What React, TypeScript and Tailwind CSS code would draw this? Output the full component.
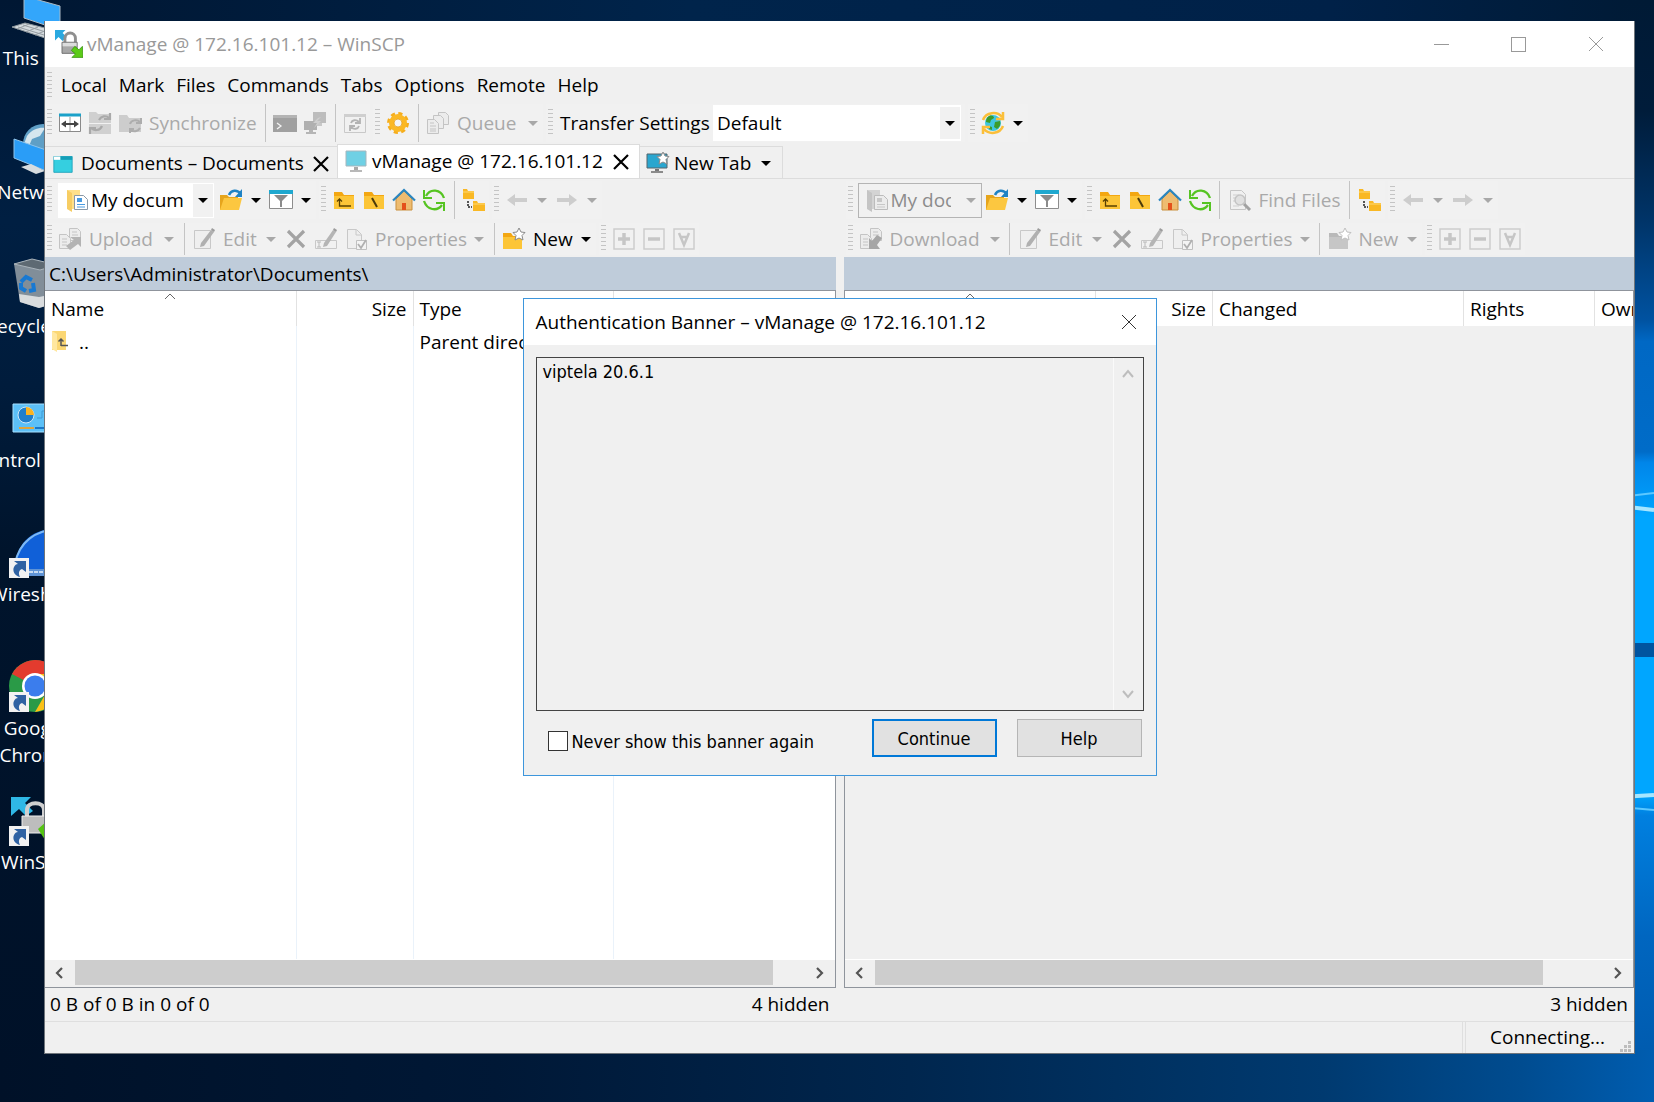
import React, { useState } from 'react'
import type { ReactNode } from 'react'

type IconProps = { off?: boolean }

const Svg = ({ children, className = 'w-6 h-6' }: { children: ReactNode; className?: string }) => (
  <svg viewBox="0 0 24 24" fill="none" className={`${className} shrink-0`} aria-hidden="true">
    {children}
  </svg>
)

/* ---------- toolbar icons ---------- */

const CompareIcon = () => (
  <Svg>
    <path d="M1.5 3.5h21v17h-21z" fill="#fff" stroke="#8a8a8a" />
    <path d="M1 2.5h22v3H1z" fill="#1ba1c9" />
    <path d="M12 6v14" stroke="#9a9a9a" />
    <path d="M6 13h12" stroke="#444" strokeWidth="2" />
    <path d="M8 9.500l-5 3.500 5 3.500zM16 9.500l5 3.500-5 3.500z" fill="#444" />
  </Svg>
)

const SyncFoldersIcon = () => (
  <Svg>
    <path d="M1 1h7l2 2h13v9H1zM1 13h22v10H1z" fill="#d0d0d0" />
    <path d="M11 9c2-4 7-5 10-2M22 2v6h-6M14 15c-2 5-8 5-11 2M2 23v-6h6" stroke="#a9a9a9" strokeWidth="2.200" />
  </Svg>
)

const SyncFolderIcon = () => (
  <Svg>
    <path d="M1 4h8l2 3h12v14H1z" fill="#cdcdcd" />
    <path d="M12 13c1-4 7-5 10-2M23 7v5h-5M22 17c-2 4-7 4-9 2M12 22v-4h4" stroke="#adadad" strokeWidth="2" />
  </Svg>
)

const ConsoleIcon = () => (
  <Svg>
    <path d="M0 4h24v17H0z" fill="#a0a0a0" />
    <path d="M0 4h24v3H0z" fill="#b4b4b4" />
    <path d="M4 12l4 3-4 3" stroke="#f4f4f4" strokeWidth="1.300" />
  </Svg>
)

const PuttyIcon = () => (
  <Svg>
    <path d="M10 1h13v11H10z" fill="#bdbdbd" />
    <path d="M14 12h5v3h-5z" fill="#c8c8c8" />
    <path d="M1 10h13v9H1z" fill="#b0b0b0" />
    <path d="M6 19h4v2H6zM3 21h10v2H3z" fill="#b5b5b5" />
    <path d="M15 7l-5 5h4l-3 5 7-7h-4l4-4z" fill="#cfcfcf" />
  </Svg>
)

const SyncBrowseIcon = () => (
  <Svg>
    <path d="M1.500 3.500h21v18h-21z" stroke="#c9c9c9" />
    <path d="M1 3h22v3H1z" fill="#cfcfcf" />
    <path d="M8 12c1-3 5-4 8-1M17 7v5h-5M16 15c-1 3-5 4-8 1M7 20v-5h5" stroke="#b3b3b3" strokeWidth="1.800" />
  </Svg>
)

const GearIcon = () => (
  <Svg>
    <circle cx="12" cy="12" r="9" stroke="#f5ad1c" strokeWidth="4" strokeDasharray="3.900 3.170" />
    <circle cx="12" cy="12" r="6.500" stroke="#fbb824" strokeWidth="5" />
    <circle cx="12" cy="12" r="4" fill="#f4f4f4" stroke="#e8a012" strokeWidth=".8" />
  </Svg>
)

const QueueIcon = () => (
  <Svg>
    <path d="M12.500 1.500h7l3 3v9h-10z" fill="#ececec" stroke="#c4c4c4" />
    <path d="M7.500 4.500h7l3 3v10h-10z" fill="#ececec" stroke="#c4c4c4" />
    <path d="M1.500 8.500h7l4 4v10h-11z" fill="#ececec" stroke="#c4c4c4" />
    <path d="M4 12h4M4 15h6M4 18h6M4 20h6" stroke="#c4c4c4" />
  </Svg>
)

const GlobeSyncIcon = () => (
  <Svg>
    <circle cx="12" cy="12" r="8" fill="#3fc6df" />
    <path d="M8 5c3-1 5 0 5 2l-3 2-1 3-4-1c0-3 1-5 3-6zM14 11l5-1c1 3 0 6-3 8l-3-2zM8 15l3 1v3l-3-1z" fill="#3c9c2c" />
    <path d="M2 9c3-8 14-9 19-3M22 1v7h-7M22 15c-3 8-14 9-19 3M2 23v-7h7" stroke="#fbbf3a" strokeWidth="2.500" />
  </Svg>
)

const MyDocsIcon = ({ off }: IconProps) => (
  <Svg>
    <path d="M2 2h13v19H2z" fill={off ? '#d4d4d4' : '#ffe08a'} />
    <path d="M2 2l5 3v19l-5-3z" fill={off ? '#c4c4c4' : '#f7cd63'} />
    <path d="M9.500 7.500h9l4 4v10h-13z" fill={off ? '#ececec' : '#fff'} stroke={off ? '#bcbcbc' : '#8a98a6'} />
    <path d="M12 10h5v4h-5z" fill={off ? '#c8c8c8' : '#4a9be0'} />
    <path d="M12 16.500h8M12 19h8" stroke={off ? '#c8c8c8' : '#4a9be0'} />
  </Svg>
)

const OpenFolderIcon = () => (
  <Svg>
    <path d="M1 7h7l2 2h9v13H1z" fill="#e6a51c" />
    <path d="M5 10h18l-3 12H1z" fill="#fcc740" />
    <path d="M10 7c2-5 8-6 12-1" stroke="#1f83c4" strokeWidth="2.500" />
    <path d="M23 1v8h-7z" fill="#1f83c4" />
  </Svg>
)

const FilterIcon = () => (
  <Svg>
    <path d="M.5 3.500h23v17H.5z" fill="#fff" stroke="#8d8d8d" />
    <path d="M0 2h24v4H0z" fill="#1fa8cf" />
    <path d="M5 7h14l-6 6v6h-2v-6z" fill="#8b8b8b" />
  </Svg>
)

const FolderBase = () => (
  <>
    <path d="M2 4h8l2 3h10v14H2z" fill="#f3a712" />
    <path d="M2 8h20v13H2z" fill="#fcc537" />
  </>
)

const ParentFolderIcon = () => (
  <Svg>
    <FolderBase />
    <path d="M7.500 11v7H19M5 13.500L7.500 11l2.500 2.500" stroke="#5a4100" strokeWidth="1.300" />
  </Svg>
)

const RootFolderIcon = () => (
  <Svg>
    <FolderBase />
    <path d="M10 10l5 9" stroke="#4b3a0a" strokeWidth="2" />
  </Svg>
)

const HomeIcon = () => (
  <Svg>
    <path d="M4 11l8-8 8 8v11H4z" fill="#eebc70" stroke="#c98f3c" />
    <path d="M10 15h4v7h-4z" fill="#e4511b" />
    <path d="M1 12.500L12 2l11 10.500" stroke="#2a86c0" strokeWidth="2.200" />
  </Svg>
)

const RefreshIcon = () => (
  <Svg>
    <path d="M4 8c4-8 15-7 18 2M20 17c-5 7-15 5-18-4" stroke="#56c422" strokeWidth="2.300" />
    <path d="M2 2v8h8M22 23v-8h-8" stroke="#56c422" strokeWidth="2" />
  </Svg>
)

const TreeIcon = () => (
  <Svg>
    <path d="M1 1h4l1 2h6v8H1z" fill="#f9b824" />
    <path d="M11 13h4l1 2h7v8H11z" fill="#f9b824" />
    <path d="M1 4h11M11 16h12" stroke="#ffd973" />
    <path d="M6 13v6h4" stroke="#222" strokeWidth="1.500" strokeDasharray="2 1" />
  </Svg>
)

const BackIcon = () => (
  <Svg><path d="M2 12l8-6v4h12v4H10v4z" fill="#cdcdcd" /></Svg>
)

const ForwardIcon = () => (
  <Svg><path d="M22 12l-8-6v4H2v4h12v4z" fill="#cdcdcd" /></Svg>
)

const FindIcon = () => (
  <Svg>
    <path d="M2.500 2.500h11l4 4v15h-15z" fill="#f0f0f0" stroke="#c6c6c6" />
    <path d="M5 7h6M5 10h4M5 13h3M5 18h6" stroke="#cfcfcf" />
    <circle cx="12" cy="12" r="5" fill="#e0e0e0" stroke="#c4c4c4" strokeWidth="1.500" />
    <path d="M16 16l6 6" stroke="#a2a2a2" strokeWidth="3" />
  </Svg>
)

const TransferPages = () => (
  <>
    <path d="M11.500 1.500h8l3 3v9h-11z" fill="#ececec" stroke="#c4c4c4" />
    <path d="M14 5h5M14 8h6" stroke="#c4c4c4" />
    <path d="M1.500 7.500h7l4 4v10h-11z" fill="#ececec" stroke="#c4c4c4" />
    <path d="M4 12h5M4 15h5M4 18h5" stroke="#c4c4c4" />
  </>
)

const UploadIcon = () => (
  <Svg>
    <TransferPages />
    <path d="M8 19l8-6-4-3h11v10l-3-3-8 6z" fill="#b3b3b3" />
  </Svg>
)

const DownloadIcon = () => (
  <Svg>
    <TransferPages />
    <path d="M23 11l-5-3-5 6-3-3v11h11l-3-4z" fill="#a6a6a6" />
  </Svg>
)

const EditIcon = () => (
  <Svg>
    <path d="M2.500 3.500h16v18h-16z" fill="#efefef" stroke="#c8c8c8" />
    <path d="M19 3l3 2L12 19l-4 1 1-4z" fill="#b0b0b0" />
    <path d="M20 1l3 2-1 2-3-2z" fill="#9c9c9c" />
  </Svg>
)

const DeleteIcon = () => (
  <Svg><path d="M4 4l16 16M20 4L4 20" stroke="#a3a3a3" strokeWidth="3.200" /></Svg>
)

const RenameIcon = () => (
  <Svg>
    <path d="M1.500 13.500h21v8h-21z" stroke="#c8c8c8" />
    <path d="M3 15h4M3 20h4M5 15v5" stroke="#b9b9b9" />
    <path d="M19 3l3 2-9 14-4 1 1-4z" fill="#b5b5b5" />
    <path d="M20 1l3 2-1 2-3-2z" fill="#9c9c9c" />
  </Svg>
)

const PropertiesIcon = () => (
  <Svg>
    <path d="M3.500 2.500h9l5 5v14h-14z" fill="#efefef" stroke="#c8c8c8" />
    <path d="M12 3v5h5" stroke="#c8c8c8" />
    <path d="M12.500 13.500h10v9h-10z" fill="#f4f4f4" stroke="#c0c0c0" />
    <path d="M14 17l3 4 5-8" stroke="#b0b0b0" strokeWidth="1.800" />
  </Svg>
)

const NewFolderIcon = ({ off }: IconProps) => (
  <Svg>
    <path d="M1 6h8l2 3h9v13H1z" fill={off ? '#b9b9b9' : '#f3a712'} />
    <path d="M1 10h19v12H1z" fill={off ? '#c6c6c6' : '#fcc537'} />
    <path
      d="M17 1l2 4 4 .5-3 3 1 4.500-4-2-4 2 1-4.500-3-3 4-.5z"
      fill="#fff" stroke={off ? '#c0c0c0' : '#8a8a8a'}
    />
  </Svg>
)

const Boxed = ({ children }: { children: ReactNode }) => (
  <Svg>
    <path d="M2 2h20v20H2z" stroke="#cdcdcd" strokeWidth="1.500" />
    {children}
  </Svg>
)

const PlusIcon = () => <Boxed><path d="M12 6v12M6 12h12" stroke="#c6c6c6" strokeWidth="3.500" /></Boxed>
const MinusIcon = () => <Boxed><path d="M6 12h12" stroke="#c6c6c6" strokeWidth="3.500" /></Boxed>
const InvertIcon = () => <Boxed><path d="M7 6l5 12 5-12M8 10h8" stroke="#c6c6c6" strokeWidth="2.500" /></Boxed>

/* ---------- tab, window and desktop icons ---------- */

const LocalTabIcon = () => (
  <Svg className="w-5 h-5">
    <path d="M1 3h22v19H1z" fill="#35cfe0" stroke="#1aa0b8" />
    <path d="M1 3h8v4H1z" fill="#fff" />
    <path d="M9 3h14v4H9z" fill="#159fb8" />
  </Svg>
)

const MonitorIcon = () => (
  <Svg className="w-6 h-6">
    <path d="M2 1h20v15H2z" fill="#6fd0e4" stroke="#a6b6bd" />
    <path d="M10 17h4v3h-4z" fill="#a8a8a8" />
    <path d="M6 20h12v2H6z" fill="#b8b8b8" />
  </Svg>
)

const NewTabIcon = () => (
  <Svg className="w-6 h-6">
    <path d="M1 2h20v14H1z" fill="#2aa6cf" stroke="#55656d" />
    <path d="M9 17h4v3H9z" fill="#777" />
    <path d="M5 19h12v2H5z" fill="#8b8b8b" />
    <path d="M17 0l2 4 4 .5-3 3 1 4.500-4-2-4 2 1-4.500-3-3 4-.5z" fill="#fff" stroke="#8a8a8a" />
  </Svg>
)

const WinScpIcon = ({ className = 'w-7 h-7' }: { className?: string }) => (
  <Svg className={className}>
    <path d="M0 0h9L6.500 2.500 10 6 6.500 9.500 3 6 0 9z" fill="#2aa9e0" />
    <path d="M8.500 12V7a4.500 4.500 0 019 0v5" stroke="#8f8f8f" strokeWidth="2.500" />
    <path d="M6 10.500h13V20H6z" fill="#a7a7a7" stroke="#6d6d6d" strokeWidth=".8" />
    <path d="M6.500 11h12v3h-12z" fill="#dcdcdc" />
    <path d="M24 23.500h-9.500l3-3-3.500-3 3-3.500 3.500 3 3-3z" fill="#5ccb18" stroke="#2f8a0a" strokeWidth=".6" />
  </Svg>
)

const FolderUpIcon = () => (
  <Svg className="w-6 h-6">
    <path d="M1 1h14v19H1z" fill="#fbd774" />
    <path d="M1 1l5 3v18l-5-3z" fill="#ffe7a0" />
    <path d="M10 16V9M7.500 11.500L10 9l2.500 2.500M10 15.500h7" stroke="#555" strokeWidth="1.500" />
  </Svg>
)

const DesktopSvg = ({ children }: { children: ReactNode }) => (
  <svg viewBox="0 0 52 52" fill="none" className="w-[52px] h-[52px]" aria-hidden="true">{children}</svg>
)

const Shortcut = () => (
  <>
    <path d="M0 32h20v20H0z" fill="#f2f2f2" />
    <path d="M5 35h12v11l-4-3c-3 1-4 4-2 8-5-1-8-6-6-10 1-2 2-3 4-3z" fill="#2f62a3" />
  </>
)

const ThisPcIcon = () => (
  <DesktopSvg>
    <path d="M15 6l36 10v24L15 28z" fill="#33a6fb" stroke="#a9bac6" />
    <path d="M3 37l13-4 32 8-12 7z" fill="#d4dade" stroke="#8f989e" />
    <path d="M9 37l26 8M14 35l26 8M8 39l12-5M17 42l12-5M26 45l12-5" stroke="#969da2" />
  </DesktopSvg>
)

const NetworkIcon = () => (
  <DesktopSvg>
    <circle cx="34" cy="20" r="20" fill="#5f9fc6" />
    <path d="M18 12c6-8 14-9 18-8l-5 8-8 3-3 7-5-2z" fill="#d6e6ee" />
    <path d="M5 15l35 12v21L5 34z" fill="#2a9df7" stroke="#8ec4ea" />
    <path d="M12 43l10-3 14 7-9 3z" fill="#d7dcdf" />
  </DesktopSvg>
)

const RecycleIcon = () => (
  <DesktopSvg>
    <path d="M5 6l6 38 19 6 14-4 4-38z" fill="#8f9aa3" fillOpacity=".9" />
    <path d="M5 6l18-5 25 6-17 5z" fill="#5e6a73" stroke="#aab4bb" />
    <path d="M10 36l20 3 15-3-2 10-13 4-19-6z" fill="#d9dcde" />
    <path d="M12 24l5-5 6 3M24 25l1 7-5 1M17 33l-5-3v-5" stroke="#1979d2" strokeWidth="4" />
  </DesktopSvg>
)

const ControlPanelIcon = () => (
  <DesktopSvg>
    <path d="M4 12h48v28H4z" fill="#5cc0f7" stroke="#a6e0ff" />
    <circle cx="17" cy="23" r="8" fill="#1f7fcb" stroke="#cfe6f5" />
    <path d="M17 23v-8a8 8 0 018 8z" fill="#fbb320" />
    <path d="M10 36h15" stroke="#e0a53a" strokeWidth="2" />
    <path d="M26 36h22" stroke="#1a77c8" strokeWidth="2" />
    <path d="M28 26h5v-7h6v8h8" stroke="#3d9bd6" />
  </DesktopSvg>
)

const WiresharkIcon = () => (
  <DesktopSvg>
    <path d="M5 44C8 14 24 3 50 2v48H18z" fill="#1060d8" />
    <path d="M6 38C10 16 26 4 50 3" stroke="#7db9f5" strokeWidth="2" />
    <path d="M18 43h34v7H18z" fill="#5e93d6" />
    <path d="M20 46h30" stroke="#c8dcf2" strokeWidth="2" strokeDasharray="4 1" />
    <Shortcut />
  </DesktopSvg>
)

const ChromeIcon = () => (
  <DesktopSvg>
    <circle cx="26" cy="26" r="26" fill="#2a9a47" />
    <path d="M26 26L3 14C9 3 20 0 26 0c12 0 21 7 24 14z" fill="#e33b2e" />
    <path d="M26 14h24c5 18-6 36-24 38l11-19z" fill="#fbc116" />
    <circle cx="26" cy="26" r="13" fill="#fff" />
    <circle cx="26" cy="26" r="10.500" fill="#3b7ded" />
    <Shortcut />
  </DesktopSvg>
)

const WinScpDesktopIcon = () => (
  <DesktopSvg>
    <path d="M2 3h20l-6 6 8 8-7 5-7-7-8 7z" fill="#2fb8e6" />
    <path d="M18 22v-6c0-9 17-9 17 0v6" stroke="#cfcfcf" strokeWidth="4" />
    <path d="M13 22h28v17H13z" fill="#bdbdbd" stroke="#efefef" />
    <path d="M29 35l9-8v5h12v8H38v9z" fill="#54c412" />
    <Shortcut />
  </DesktopSvg>
)

const desktopItems = [
  { name: 'This PC', icon: <ThisPcIcon /> },
  { name: 'Network', icon: <NetworkIcon /> },
  { name: 'Recycle Bin', icon: <RecycleIcon /> },
  { name: 'Control Panel', icon: <ControlPanelIcon /> },
  { name: 'Wireshark', icon: <WiresharkIcon /> },
  { name: 'Google\nChrome', icon: <ChromeIcon /> },
  { name: 'WinSCP', icon: <WinScpDesktopIcon /> },
]

const Wallpaper = () => (
  <svg viewBox="0 0 1654 1102" preserveAspectRatio="none" className="absolute inset-0 w-full h-full" aria-hidden="true">
    <defs>
      <linearGradient id="left" x1="0" y1="0" x2="0" y2="1">
        <stop offset="0" stopColor="#001733" />
        <stop offset=".2" stopColor="#001f42" />
        <stop offset=".35" stopColor="#001c3c" />
        <stop offset=".5" stopColor="#00142c" />
        <stop offset="1" stopColor="#001128" />
      </linearGradient>
      <linearGradient id="bottom" x1="0" y1="0" x2="1" y2="0">
        <stop offset="0" stopColor="#001128" />
        <stop offset=".3" stopColor="#001836" />
        <stop offset=".55" stopColor="#00264e" />
        <stop offset=".8" stopColor="#003a70" />
        <stop offset=".92" stopColor="#004c90" />
        <stop offset="1" stopColor="#005db0" />
      </linearGradient>
      <linearGradient id="top" x1="0" y1="0" x2="1" y2="0">
        <stop offset="0" stopColor="#001733" />
        <stop offset=".4" stopColor="#00244b" />
        <stop offset=".8" stopColor="#002148" />
        <stop offset="1" stopColor="#001a35" />
      </linearGradient>
      <linearGradient id="edge" x1="0" y1="0" x2="0" y2="1">
        <stop offset="0" stopColor="#001a35" />
        <stop offset=".1" stopColor="#001c3a" />
        <stop offset=".2" stopColor="#003468" />
        <stop offset=".29" stopColor="#0052a0" />
        <stop offset=".31" stopColor="#0068c4" />
        <stop offset=".41" stopColor="#006cc8" />
        <stop offset=".42" stopColor="#0086ea" />
        <stop offset=".47" stopColor="#00a6ff" />
        <stop offset=".72" stopColor="#00a6ff" />
        <stop offset=".74" stopColor="#0080e0" />
        <stop offset=".85" stopColor="#0066c0" />
        <stop offset="1" stopColor="#0057a8" />
      </linearGradient>
    </defs>
    <path d="M0 0h1654v1102H0z" fill="url(#left)" />
    <path d="M46 0h1608v40H46z" fill="url(#top)" />
    <path d="M1620 0h34v1102h-34z" fill="url(#edge)" />
    <path d="M0 1050h1654v52H0z" fill="url(#bottom)" />
    <path d="M1620 643h34v14h-34z" fill="#0054a0" />
    <path d="M1620 506l34 4M1620 797l34-2" stroke="#a6e6ff" strokeWidth="4" />
    <path d="M1620 497l34-4M1620 807l34 3" stroke="#5cc8ff" strokeWidth="2" />
  </svg>
)

/* ---------- toolbar parts ---------- */

const Grip = () => (
  <span className="w-2.5 h-7 pl-0.5 shrink-0">
    <span className="block w-[5px] h-full bg-[repeating-linear-gradient(180deg,#c4c4c4_0_1px,transparent_1px_4px)]" />
  </span>
)

const Sep = () => (
  <span className="w-2.5 shrink-0 self-stretch flex justify-center">
    <span className="w-px bg-[#c4c4c4]" />
  </span>
)

const Caret = ({ off }: IconProps) => (
  <span className="w-5 shrink-0 flex justify-center">
    <svg viewBox="0 0 10 5" className="w-2.5 h-[5px]" aria-hidden="true">
      <path d="M0 0h10L5 5z" fill={off ? '#a8a8a8' : '#000'} />
    </svg>
  </span>
)

type ToolProps = {
  icon?: ReactNode
  label: string
  text?: boolean
  drop?: boolean
  off?: boolean
  width?: string
}

const Tool = ({ icon, label, text, drop, off, width = '' }: ToolProps) => (
  <button
    type="button"
    aria-label={label}
    disabled={off}
    className={`h-8 shrink-0 flex items-center whitespace-nowrap ${off ? 'text-[#a9a9a9]' : 'text-black'} ${width}`}
  >
    {icon && <span className="w-[30px] shrink-0 flex justify-center">{icon}</span>}
    {text && <span className="pl-1 mr-auto">{label}</span>}
    {drop && <Caret off={off} />}
  </button>
)

const Group = ({ children }: { children: ReactNode }) => (
  <div className="h-full flex items-center shrink-0 bg-[#f1f1f1]">
    <Grip />
    {children}
  </div>
)

const PaneToolbars = ({ remote }: { remote?: boolean }) => (
  <div className={remote ? 'pl-0.5' : ''}>
    <div className="h-[42px] py-0.5 flex gap-[3px]">
      <Group>
        {remote ? (
          <div className="w-[126px] h-[35px] pl-0.5 flex">
            <div className="flex-1 flex items-center border border-[#b4b4b4] pl-1.5 min-w-0">
              <MyDocsIcon off />
              <select aria-label="Remote directory" disabled className="appearance-none w-[60px] ml-0.5 mr-auto bg-transparent text-[#8c8c8c] opacity-100 overflow-hidden whitespace-nowrap">
                <option>My documents</option>
              </select>
              <Caret off />
            </div>
          </div>
        ) : (
          <div className="w-[161px] h-[35px] pl-[3px] pr-0.5 flex items-center">
            <div className="h-full flex-1 flex items-center border border-white bg-white pl-1.5">
              <MyDocsIcon />
              <select aria-label="Local directory" className="appearance-none w-[92px] ml-0.5 mr-auto bg-transparent overflow-hidden whitespace-nowrap">
                <option>My documents</option>
              </select>
              <span className="h-full flex items-center bg-[#f1f1f1]"><Caret /></span>
            </div>
          </div>
        )}
        <Tool icon={<OpenFolderIcon />} label="Open directory" drop />
        <Tool icon={<FilterIcon />} label="Filter" drop />
      </Group>
      <Group>
        <Tool icon={<ParentFolderIcon />} label="Parent directory" />
        <Tool icon={<RootFolderIcon />} label="Root directory" />
        <Tool icon={<HomeIcon />} label="Home directory" />
        <Tool icon={<RefreshIcon />} label="Refresh" />
        <Sep />
        {remote && (
          <>
            <Tool icon={<FindIcon />} label="Find Files" text off width="w-[120px]" />
            <Sep />
          </>
        )}
        <Tool icon={<TreeIcon />} label="Tree" />
      </Group>
      <Group>
        <Tool icon={<BackIcon />} label="Back" drop off />
        <Tool icon={<ForwardIcon />} label="Forward" drop off />
      </Group>
    </div>
    <div className="h-9 py-0.5 flex gap-[3px]">
      <Group>
        {remote ? (
          <Tool icon={<DownloadIcon />} label="Download" text drop off width="w-[149px]" />
        ) : (
          <Tool icon={<UploadIcon />} label="Upload" text drop off width="w-[124px]" />
        )}
        <Sep />
        <Tool icon={<EditIcon />} label="Edit" text drop off width="w-[92px]" />
        <Tool icon={<DeleteIcon />} label="Delete" off />
        <Tool icon={<RenameIcon />} label="Rename" off />
        <Tool icon={<PropertiesIcon />} label="Properties" text drop off width="w-[148px]" />
        <Sep />
        <Tool icon={<NewFolderIcon off={remote} />} label="New" text drop off={remote} width="w-[97px]" />
      </Group>
      <Group>
        <Tool icon={<PlusIcon />} label="Select" off />
        <Tool icon={<MinusIcon />} label="Unselect" off />
        <Tool icon={<InvertIcon />} label="Invert selection" off />
      </Group>
    </div>
  </div>
)

/* ---------- file panels ---------- */

const Chevron = ({ d }: { d: string }) => (
  <svg viewBox="0 0 12 12" fill="none" className="w-3 h-3" aria-hidden="true">
    <path d={d} stroke="#555" strokeWidth="2.200" />
  </svg>
)

const HScroll = ({ thumb }: { thumb: string }) => (
  <div className="h-7 pb-0.5 flex bg-[#f0f0f0] border-t border-white">
    <button type="button" aria-label="Scroll left" className="w-[30px] h-full flex items-center justify-center">
      <Chevron d="M8 1L3 6l5 5" />
    </button>
    <div className="flex-1">
      <div className={`h-full bg-[#cdcdcd] ${thumb}`} />
    </div>
    <button type="button" aria-label="Scroll right" className="w-8 h-full flex items-center justify-center">
      <Chevron d="M4 1l5 5-5 5" />
    </button>
  </div>
)

type Column = { title: string; width: string; right?: boolean }

const localColumns: Column[] = [
  { title: 'Name', width: 'w-[251px]' },
  { title: 'Size', width: 'w-[117px]', right: true },
  { title: 'Type', width: 'w-[200px]' },
  { title: 'Changed', width: '' },
]

const remoteColumns: Column[] = [
  { title: 'Name', width: 'w-[251px]' },
  { title: 'Size', width: 'w-[117px]', right: true },
  { title: 'Changed', width: 'w-[251px]' },
  { title: 'Rights', width: 'w-[131px]' },
  { title: 'Owner', width: '' },
]

const FileTable = ({ columns, children }: { columns: Column[]; children?: ReactNode }) => (
  <table className="w-full h-full table-fixed border-collapse">
    <thead>
      <tr className="h-[35px] bg-white">
        {columns.map((col) => (
          <th
            key={col.title}
            className={`relative p-0 px-1.5 pt-0.5 font-normal whitespace-nowrap overflow-hidden border-r border-[#e2e2e2] last:border-r-0 ${col.width} ${col.right ? 'text-right' : 'text-left'}`}
          >
            {col.title}
            {col.title === 'Name' && (
              <svg viewBox="0 0 12 7" fill="none" className="absolute top-0.5 left-1/2 -translate-x-1/2 w-3 h-[7px]" aria-hidden="true">
                <path d="M1 6l5-5 5 5" stroke="#666" />
              </svg>
            )}
          </th>
        ))}
      </tr>
    </thead>
    <tbody>{children}</tbody>
  </table>
)

const cell = 'p-0 px-1.5 border-r border-[#eaf2fa] last:border-r-0 whitespace-nowrap overflow-hidden'

const LocalPane = () => (
  <section aria-label="Local files" className="min-w-0 flex flex-col">
    <PaneToolbars />
    <div className="h-[33px] pt-0.5 flex items-center px-1 bg-[#bfccda]">C:\Users\Administrator\Documents\</div>
    <div className="flex-1 flex flex-col bg-white border-t border-r border-b border-[#8f949c]">
      <div className="flex-1">
        <FileTable columns={localColumns}>
          <tr className="h-[32px]">
            <td className={cell}>
              <span className="flex items-center gap-1"><FolderUpIcon />..</span>
            </td>
            <td className={cell} />
            <td className={cell}>Parent directory</td>
            <td className={cell} />
          </tr>
          <tr>
            <td className={cell} />
            <td className={cell} />
            <td className={cell} />
            <td className={cell} />
          </tr>
        </FileTable>
      </div>
      <HScroll thumb="w-[96%]" />
    </div>
    <div className="h-[33px] pl-[5px] pr-1.5 flex items-center justify-between">
      <span>0 B of 0 B in 0 of 0</span>
      <span>4 hidden</span>
    </div>
  </section>
)

const RemotePane = () => (
  <section aria-label="Remote files" className="min-w-0 flex flex-col">
    <PaneToolbars remote />
    <div className="h-[33px] bg-[#bfccda]" />
    <div className="flex-1 flex flex-col bg-[#f0f0f0] border border-[#8f949c]">
      <div className="flex-1 overflow-hidden">
        <FileTable columns={remoteColumns}>
          <tr><td colSpan={5} /></tr>
        </FileTable>
      </div>
      <HScroll thumb="w-[92%]" />
    </div>
    <div className="h-[33px] pl-[5px] pr-1.5 flex items-center justify-end">3 hidden</div>
  </section>
)

/* ---------- window chrome ---------- */

const CrossIcon = ({ className }: { className: string }) => (
  <svg viewBox="0 0 16 16" fill="none" className={className} aria-hidden="true">
    <path d="M1 1l14 14M15 1L1 15" stroke="currentColor" />
  </svg>
)

const TitleBar = () => (
  <header className="h-[46px] flex items-center bg-white text-[#999]">
    <div className="flex-1 flex items-center gap-1 pl-2.5">
      <WinScpIcon />
      <h1>vManage @ 172.16.101.12 – WinSCP</h1>
    </div>
    <button type="button" aria-label="Minimize" className="w-[77px] h-full flex items-center justify-center">
      <span className="w-[15px] h-px bg-[#999]" />
    </button>
    <button type="button" aria-label="Maximize" className="w-[77px] h-full flex items-center justify-center">
      <span className="w-[15px] h-[15px] border border-[#999]" />
    </button>
    <button type="button" aria-label="Close" className="w-[77px] h-full flex items-center justify-center">
      <CrossIcon className="w-4 h-4" />
    </button>
  </header>
)

const menus = ['Local', 'Mark', 'Files', 'Commands', 'Tabs', 'Options', 'Remote', 'Help']

const MenuBar = () => (
  <nav className="h-[37px] flex items-center">
    <Grip />
    {menus.map((menu) => (
      <button key={menu} type="button" className="h-8 px-1.5">{menu}</button>
    ))}
  </nav>
)

const MainToolbar = () => (
  <div className="h-10 pb-0.5 flex gap-[3px]">
    <Group>
      <Tool icon={<CompareIcon />} label="Compare directories" />
      <Tool icon={<SyncFoldersIcon />} label="Synchronize directories" off />
      <Tool icon={<SyncFolderIcon />} label="Synchronize" text off width="w-[145px]" />
      <Sep />
      <Tool icon={<ConsoleIcon />} label="Console" off />
      <Tool icon={<PuttyIcon />} label="Open in PuTTY" off />
      <Sep />
      <Tool icon={<SyncBrowseIcon />} label="Synchronized browsing" off />
    </Group>
    <Group>
      <Tool icon={<GearIcon />} label="Preferences" />
      <Sep />
      <Tool icon={<QueueIcon />} label="Queue" text drop off width="w-[120px]" />
    </Group>
    <Group>
      <label htmlFor="transfer" className="pl-1 w-[157px] whitespace-nowrap">Transfer Settings</label>
      <div className="h-9 w-[248px] flex items-center bg-white border-r border-white">
        <select id="transfer" className="appearance-none flex-1 pl-1 bg-transparent">
          <option>Default</option>
        </select>
        <span className="h-8 flex items-center bg-[#f1f1f1]"><Caret /></span>
      </div>
      <span className="w-1" />
    </Group>
    <Group>
      <Tool icon={<GlobeSyncIcon />} label="Keep up to date" drop />
    </Group>
  </div>
)

const TabClose = ({ name }: { name: string }) => (
  <button type="button" aria-label={`Close ${name}`} className="ml-auto">
    <svg viewBox="0 0 16 16" fill="none" className="w-4 h-4" aria-hidden="true">
      <path d="M1 1l14 14M15 1L1 15" stroke="#000" strokeWidth="2.200" />
    </svg>
  </button>
)

const TabStrip = () => (
  <div className="h-[35px] flex items-end border-b border-[#dcdcdc]">
    <div className="w-[292px] h-8 px-2 pt-0.5 flex items-center gap-2 border-t border-[#dcdcdc]">
      <LocalTabIcon />
      <span className="whitespace-nowrap">Documents – Documents</span>
      <TabClose name="Documents" />
    </div>
    <div className="w-[303px] h-[34px] pl-1.5 pr-2.5 flex items-center gap-1 bg-white border border-b-0 border-[#dcdcdc]">
      <MonitorIcon />
      <span className="whitespace-nowrap">vManage @ 172.16.101.12</span>
      <TabClose name="vManage" />
    </div>
    <button type="button" className="w-[143px] h-8 pl-1.5 pr-1.5 pt-0.5 flex items-center gap-1 border-t border-r border-[#dcdcdc] whitespace-nowrap">
      <NewTabIcon />
      <span className="mr-auto">New Tab</span>
      <Caret />
    </button>
  </div>
)

const StatusBar = () => (
  <footer className="h-8 flex items-stretch border-t border-[#dfdfdf]">
    <div className="flex-1 border-r border-[#dfdfdf]" />
    <div className="w-[169px] ml-0.5 pr-0.5 flex items-center justify-between border-l border-[#dfdfdf]">
      <span className="pl-6">Connecting...</span>
      <svg viewBox="0 0 12 12" className="w-3 h-3 self-end" aria-hidden="true">
        <path d="M8 0h3v3H8zM4 4h3v3H4zM8 4h3v3H8zM0 8h3v3H0zM4 8h3v3H4zM8 8h3v3H8z" fill="#bdbdbd" />
      </svg>
    </div>
  </footer>
)

const BannerDialog = () => {
  const [never, setNever] = useState(false)

  return (
    <div role="dialog" aria-labelledby="banner-title" className="w-[634px] h-[478px] flex flex-col bg-[#f0f0f0] border border-[#3d96dc]">
      <div className="h-[46px] flex items-center justify-between pl-3 bg-white">
        <h2 id="banner-title">Authentication Banner – vManage @ 172.16.101.12</h2>
        <button type="button" aria-label="Close" className="w-[54px] h-full flex items-center justify-center text-[#333]">
          <CrossIcon className="w-4 h-4" />
        </button>
      </div>
      <div className="flex-1 flex flex-col px-3 pt-3 pb-3 font-['DejaVu_Sans_Condensed','DejaVu_Sans',sans-serif] text-[18px]">
        <div className="flex-1 flex border border-[#444]">
          <textarea
            aria-label="Authentication banner"
            readOnly
            value="viptela 20.6.1"
            className="flex-1 resize-none bg-transparent px-1.5 leading-[27px] outline-none"
          />
          <div className="w-[30px] flex flex-col justify-between items-center py-2.5 border-l border-[#fafafa]">
            <svg viewBox="0 0 12 12" fill="none" className="w-3 h-3" aria-hidden="true">
              <path d="M1 9l5-6 5 6" stroke="#bdbdbd" strokeWidth="2" />
            </svg>
            <svg viewBox="0 0 12 12" fill="none" className="w-3 h-3" aria-hidden="true">
              <path d="M1 3l5 6 5-6" stroke="#bdbdbd" strokeWidth="2" />
            </svg>
          </div>
        </div>
        <div className="pt-2 pl-3 pr-0.5 flex items-start gap-5">
          <label className="mr-auto h-11 flex items-center gap-1 whitespace-nowrap">
            <input
              type="checkbox"
              checked={never}
              onChange={(e) => setNever(e.target.checked)}
              className="appearance-none w-5 h-5 bg-white border border-[#333] checked:bg-[#0078d7]"
            />
            Never show this banner again
          </label>
          <button type="button" className="w-[125px] h-[38px] bg-[#e1e1e1] border-2 border-[#0078d7]">Continue</button>
          <button type="button" className="w-[125px] h-[38px] bg-[#e1e1e1] border border-[#b5b5b5]">Help</button>
        </div>
      </div>
    </div>
  )
}

const App = () => (
  <main className="relative w-full h-screen overflow-hidden bg-[#00142c] font-['Open_Sans','Noto_Sans',sans-serif] text-[19px] leading-[27px] text-black">
    <Wallpaper />

    {/* Desktop icons */}
    <ul className="absolute -top-2.5 -left-4 w-[102px] text-white">
      {desktopItems.map((item) => (
        <li key={item.name} className="h-[134px] flex flex-col items-center gap-[3px]">
          {item.icon}
          <span className="whitespace-pre text-center">{item.name}</span>
        </li>
      ))}
    </ul>

    {/* WinSCP window */}
    <div className="absolute top-[21px] bottom-[48px] left-[44px] right-[19px] flex flex-col bg-[#f0f0f0] border border-t-0 border-[#6f757b]">
      <TitleBar />
      <MenuBar />
      <MainToolbar />
      <TabStrip />
      <div className="flex-1 grid grid-cols-2 gap-2">
        <LocalPane />
        <RemotePane />
      </div>
      <StatusBar />
      <div className="absolute inset-0 flex items-center justify-center">
        <BannerDialog />
      </div>
    </div>
  </main>
)

export default App
